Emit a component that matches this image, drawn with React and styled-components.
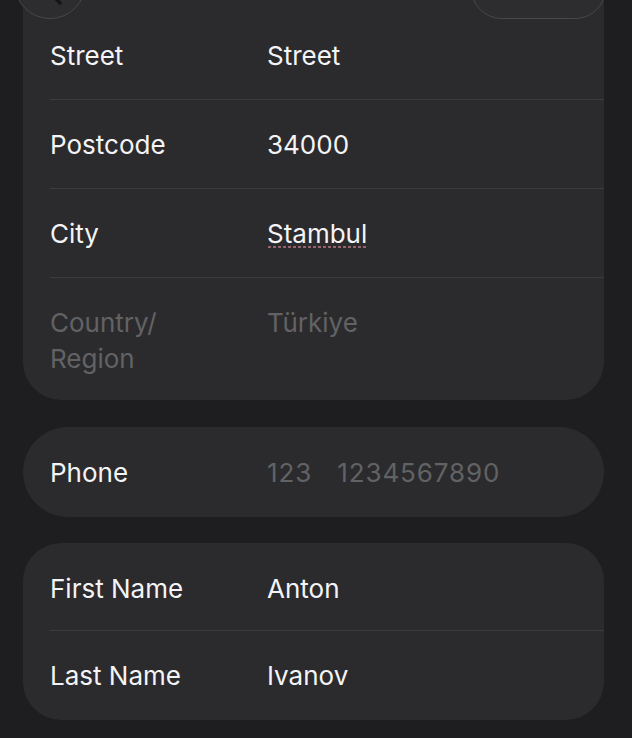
import React from "react";
import styled, { createGlobalStyle } from "styled-components";

const Global = createGlobalStyle`
  html, body { margin: 0; padding: 0; background: #1e1e20; }
  body { font-family: Inter, "Noto Sans", "Liberation Sans", sans-serif; -webkit-font-smoothing: antialiased; }
  #root { width: 632px; height: 738px; overflow: hidden; position: relative; }
`;

const Page = styled.div`
  position: relative;
  width: 632px;
  height: 738px;
  overflow: hidden;
  background: #1e1e20;
  padding: 0 28px 0 23px;
  box-sizing: border-box;
  display: flex;
  flex-direction: column;
`;

const Card = styled.div`
  background: #2b2b2d;
  border-radius: ${(p) => p.$radius || 38}px;
  margin-top: ${(p) => p.$mt || 0}px;
  padding-top: ${(p) => p.$padTop || 0}px;
  display: flex;
  flex-direction: column;
`;

const Row = styled.div`
  display: grid;
  grid-template-columns: 217px 1fr;
  margin-left: 27px;
  padding: ${(p) => p.$pt ?? 27}px 0 ${(p) => p.$pb ?? 25}px;
  border-bottom: ${(p) => (p.$last ? "none" : "1px solid #3b3b3d")};
  font-size: 26px;
  line-height: 36px;
  letter-spacing: 0px;
`;

const Label = styled.div`
  color: ${(p) => (p.$muted ? "#626265" : "#f4f4f6")};
  width: 150px;
`;

const Value = styled.div`
  color: ${(p) => (p.$muted ? "#626265" : "#f4f4f6")};
  display: flex;
  gap: ${(p) => p.$gap || 0}px;
`;

const Digits = styled.span`
  letter-spacing: 0.9px;
`;

const Misspelled = styled.span`
  display: inline-block;
  line-height: 36px;
  background-image: radial-gradient(circle at 2.5px 31px, #9a6470 1.1px, transparent 1.5px);
  background-size: 5px 36px;
  background-repeat: repeat-x;
`;

const CircleButton = styled.div`
  position: absolute;
  left: 14px;
  top: -53px;
  width: 72px;
  height: 72px;
  border-radius: 50%;
  background: #2d2d2f;
  border: 1.5px solid #48484b;
  box-sizing: border-box;
  display: flex;
  align-items: center;
  justify-content: center;
`;

const PillButton = styled.div`
  position: absolute;
  left: 471px;
  top: -42px;
  width: 135px;
  height: 61px;
  border-radius: 31px;
  background: #2d2d2f;
  border: 1.5px solid #48484b;
  box-sizing: border-box;
`;

export default function App() {
  return (
    <>
      <Global />
      <Page>
        <Card $mt={-40} $padTop={51}>
          <Row>
            <Label>Street</Label>
            <Value>Street</Value>
          </Row>
          <Row>
            <Label>Postcode</Label>
            <Value>34000</Value>
          </Row>
          <Row>
            <Label>City</Label>
            <Value>
              <Misspelled>Stambul</Misspelled>
            </Value>
          </Row>
          <Row $last $pt={27} $pb={23}>
            <Label $muted>Country/ Region</Label>
            <Value $muted>Türkiye</Value>
          </Row>
        </Card>
        <Card $radius={45} $mt={27}>
          <Row $last $pt={28} $pb={26}>
            <Label>Phone</Label>
            <Value $muted $gap={25}>
              <Digits>123</Digits>
              <Digits>1234567890</Digits>
            </Value>
          </Row>
        </Card>
        <Card $radius={38} $mt={26}>
          <Row $pt={28} $pb={23}>
            <Label>First Name</Label>
            <Value>Anton</Value>
          </Row>
          <Row $last $pt={27} $pb={26}>
            <Label>Last Name</Label>
            <Value>Ivanov</Value>
          </Row>
        </Card>
        <CircleButton>
          <svg width="30" height="34" viewBox="0 0 30 34" style={{ marginTop: 14, marginLeft: 6 }}>
            <path d="M22 4 L10 17 L22 30" fill="none" stroke="#151517" strokeWidth="3.5" strokeLinecap="round" strokeLinejoin="round" />
          </svg>
        </CircleButton>
        <PillButton />
      </Page>
    </>
  );
}
